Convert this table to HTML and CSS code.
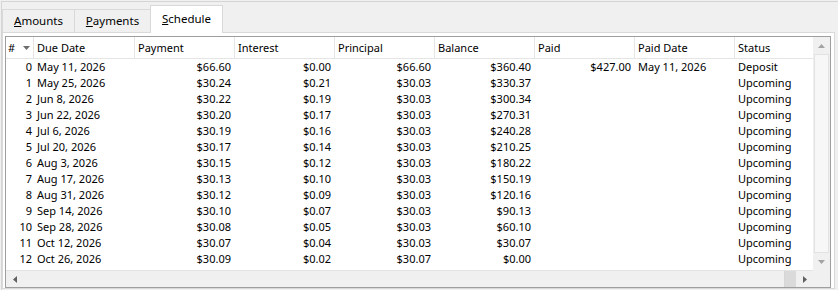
FILE: index.html
```html
<!DOCTYPE html>
<html>
<head>
<meta charset="utf-8">
<link rel="stylesheet" href="styles.css">
</head>
<body>
<div class="frame">
  <div class="tabs">
    <div class="tab t1"><u>A</u>mounts</div>
    <div class="tab t2"><u>P</u>ayments</div>
    <div class="tab t3 active"><u>S</u>chedule</div>
  </div>
  <div class="page">
    <div class="lv">
      <div class="viewport">
        <table class="grid">
          <colgroup>
            <col class="c-num"><col class="c-date"><col class="c-w"><col class="c-w"><col class="c-w"><col class="c-w"><col class="c-w"><col class="c-w"><col class="c-w">
          </colgroup>
          <thead>
            <tr>
              <th class="hnum">#<svg class="sort" width="7" height="4" viewBox="0 0 7 4"><path d="M0 0H7L3.5 4Z" fill="#6d6d6d"/></svg></th>
              <th>Due Date</th><th>Payment</th><th>Interest</th><th>Principal</th><th>Balance</th><th>Paid</th><th>Paid Date</th><th>Status</th>
            </tr>
          </thead>
          <tbody>
            <tr><td class="r">0</td><td>May 11, 2026</td><td class="r">$66.60</td><td class="r">$0.00</td><td class="r">$66.60</td><td class="r">$360.40</td><td class="r">$427.00</td><td>May 11, 2026</td><td>Deposit</td></tr>
            <tr><td class="r">1</td><td>May 25, 2026</td><td class="r">$30.24</td><td class="r">$0.21</td><td class="r">$30.03</td><td class="r">$330.37</td><td></td><td></td><td>Upcoming</td></tr>
            <tr><td class="r">2</td><td>Jun 8, 2026</td><td class="r">$30.22</td><td class="r">$0.19</td><td class="r">$30.03</td><td class="r">$300.34</td><td></td><td></td><td>Upcoming</td></tr>
            <tr><td class="r">3</td><td>Jun 22, 2026</td><td class="r">$30.20</td><td class="r">$0.17</td><td class="r">$30.03</td><td class="r">$270.31</td><td></td><td></td><td>Upcoming</td></tr>
            <tr><td class="r">4</td><td>Jul 6, 2026</td><td class="r">$30.19</td><td class="r">$0.16</td><td class="r">$30.03</td><td class="r">$240.28</td><td></td><td></td><td>Upcoming</td></tr>
            <tr><td class="r">5</td><td>Jul 20, 2026</td><td class="r">$30.17</td><td class="r">$0.14</td><td class="r">$30.03</td><td class="r">$210.25</td><td></td><td></td><td>Upcoming</td></tr>
            <tr><td class="r">6</td><td>Aug 3, 2026</td><td class="r">$30.15</td><td class="r">$0.12</td><td class="r">$30.03</td><td class="r">$180.22</td><td></td><td></td><td>Upcoming</td></tr>
            <tr><td class="r">7</td><td>Aug 17, 2026</td><td class="r">$30.13</td><td class="r">$0.10</td><td class="r">$30.03</td><td class="r">$150.19</td><td></td><td></td><td>Upcoming</td></tr>
            <tr><td class="r">8</td><td>Aug 31, 2026</td><td class="r">$30.12</td><td class="r">$0.09</td><td class="r">$30.03</td><td class="r">$120.16</td><td></td><td></td><td>Upcoming</td></tr>
            <tr><td class="r">9</td><td>Sep 14, 2026</td><td class="r">$30.10</td><td class="r">$0.07</td><td class="r">$30.03</td><td class="r">$90.13</td><td></td><td></td><td>Upcoming</td></tr>
            <tr><td class="r">10</td><td>Sep 28, 2026</td><td class="r">$30.08</td><td class="r">$0.05</td><td class="r">$30.03</td><td class="r">$60.10</td><td></td><td></td><td>Upcoming</td></tr>
            <tr><td class="r">11</td><td>Oct 12, 2026</td><td class="r">$30.07</td><td class="r">$0.04</td><td class="r">$30.03</td><td class="r">$30.07</td><td></td><td></td><td>Upcoming</td></tr>
            <tr><td class="r">12</td><td>Oct 26, 2026</td><td class="r">$30.09</td><td class="r">$0.02</td><td class="r">$30.07</td><td class="r">$0.00</td><td></td><td></td><td>Upcoming</td></tr>
          </tbody>
        </table>
      </div>
      <div class="vscroll">
        <div class="sbtn"><svg width="7" height="4" viewBox="0 0 7 4"><path d="M3.5 0L7 4H0Z" fill="#a3a3a3"/></svg></div>
        <div class="vthumb"></div>
        <div class="sbtn"><svg width="7" height="4" viewBox="0 0 7 4"><path d="M0 0H7L3.5 4Z" fill="#a3a3a3"/></svg></div>
      </div>
      <div class="hscroll">
        <div class="sbtn"><svg width="4" height="7" viewBox="0 0 4 7"><path d="M0 3.5L4 0V7Z" fill="#606060"/></svg></div>
        <div class="htrack"><div class="hthumb"></div></div>
        <div class="sbtn"><svg width="4" height="7" viewBox="0 0 4 7"><path d="M4 3.5L0 0V7Z" fill="#606060"/></svg></div>
      </div>
      <div class="corner"></div>
    </div>
  </div>
</div>
</body>
</html>
```

FILE: styles.css
```css
html, body {
  margin: 0;
  padding: 0;
}
body {
  background: #f0f0f0;
  font-family: "Noto Sans", "Open Sans", sans-serif;
  font-size: 11px;
  color: #000;
  padding: 1px 0 0 1px;
}
.frame {
  width: 837px;
  height: 289px;
  box-sizing: border-box;
  border-top: 1px solid #d5d5d5;
  border-left: 1px solid #d5d5d5;
  display: flex;
  flex-direction: column;
}
.tabs {
  height: 30px;
  display: flex;
  align-items: flex-end;
  position: relative;
  z-index: 1;
}
.tab {
  height: 23px;
  box-sizing: border-box;
  border: 1px solid #d9d9d9;
  border-bottom: none;
  background: #f0f0f0;
  display: flex;
  align-items: center;
  justify-content: center;
  margin-right: -1px;
  padding-bottom: 1px;
  font-size: 11.5px;
}
.t1 { width: 73px; }
.t2 { width: 77px; }
.t3 { width: 73px; }
.tab.active {
  height: 28px;
  margin-bottom: -1px;
  background: #fff;
  padding-bottom: 3px;
}
.page {
  width: 833px;
  height: 257px;
  box-sizing: border-box;
  border: 1px solid #d9d9d9;
  background: #fff;
  padding: 3px 0 0 2px;
}
.lv {
  width: 826px;
  height: 252px;
  box-sizing: border-box;
  border: 1px solid #9e9e9e;
  display: grid;
  grid-template-columns: 807px 17px;
  grid-template-rows: 233px 17px;
}
.viewport {
  overflow: hidden;
  background: #fff;
}
.grid {
  table-layout: fixed;
  border-collapse: separate;
  border-spacing: 0;
  width: 829px;
}
.c-num { width: 28px; }
.c-date { width: 101px; }
.c-w { width: 100px; }
.grid th {
  height: 21px;
  padding: 0 0 0 3px;
  text-align: left;
  font-weight: normal;
  border-right: 1px solid #e5e5e5;
  border-bottom: 1px solid #e5e5e5;
  white-space: nowrap;
  overflow: hidden;
}
.grid th.hnum {
  padding-left: 2px;
}
.sort {
  margin-left: 8px;
  vertical-align: 2px;
}
.grid td {
  height: 16px;
  padding: 0 3px 0 3px;
  border-right: 1px solid transparent;
  white-space: nowrap;
  overflow: hidden;
  line-height: 16px;
}
.grid td.r {
  text-align: right;
}
.grid td:first-child {
  padding-right: 1px;
}
.vscroll {
  background: #f0f0f0;
  display: flex;
  flex-direction: column;
}
.sbtn {
  width: 17px;
  height: 17px;
  flex: none;
  display: flex;
  align-items: center;
  justify-content: center;
  background: #f0f0f0;
}
.vthumb {
  flex: 1;
  margin: 0 1px;
  box-sizing: border-box;
  border: 1px solid #e2e2e2;
  background: #f7f7f7;
}
.hscroll {
  background: #f0f0f0;
  display: flex;
  border-top: 1px solid #e3e3e3;
  box-sizing: border-box;
}
.hscroll .sbtn {
  height: 16px;
}
.htrack {
  flex: 1;
  display: flex;
  background: #dadada;
}
.hthumb {
  width: 762px;
  background: #f0f0f0;
  border-right: 1px solid #d6d6d6;
  box-sizing: border-box;
}
.corner {
  background: #f0f0f0;
}
```
